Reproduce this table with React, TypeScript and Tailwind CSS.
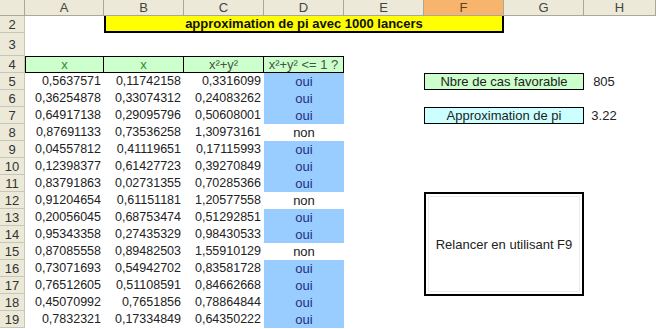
const cols = ["A", "B", "C", "D", "E", "F", "G", "H"];

const rows: [string, string, string, boolean][] = [
  ["0,5637571", "0,11742158", "0,3316099", true],
  ["0,36254878", "0,33074312", "0,24083262", true],
  ["0,64917138", "0,29095796", "0,50608001", true],
  ["0,87691133", "0,73536258", "1,30973161", false],
  ["0,04557812", "0,41119651", "0,17115993", true],
  ["0,12398377", "0,61427723", "0,39270849", true],
  ["0,83791863", "0,02731355", "0,70285366", true],
  ["0,91204654", "0,61151181", "1,20577558", false],
  ["0,20056045", "0,68753474", "0,51292851", true],
  ["0,95343358", "0,27435329", "0,98430533", true],
  ["0,87085558", "0,89482503", "1,55910129", false],
  ["0,73071693", "0,54942702", "0,83581728", true],
  ["0,76512605", "0,51108591", "0,84662668", true],
  ["0,45070992", "0,7651856", "0,78864844", true],
  ["0,7832321", "0,17334849", "0,64350222", true],
];

// excel row n sits on grid row n (grid row 1 is the column header)
const rowStart: Record<number, string> = {
  2: "row-start-2", 3: "row-start-3", 4: "row-start-4", 5: "row-start-5",
  6: "row-start-6", 7: "row-start-7", 8: "row-start-8", 9: "row-start-9",
  10: "row-start-10", 11: "row-start-11", 12: "row-start-12", 13: "row-start-13",
  14: "row-start-14", 15: "row-start-15", 16: "row-start-16", 17: "row-start-17",
  18: "row-start-18", 19: "row-start-19",
};

const ColHeader = ({ label }: { label: string }) => (
  <div
    className={`flex items-center justify-center border-r border-b border-[#aca899] text-[13px] leading-none ${
      label === "F" ? "bg-[#f7b46c] text-[#5a4020]" : "bg-[#ece9d8] text-[#444]"
    }`}
  >
    {label}
  </div>
);

const RowHeader = ({ n }: { n: number }) => (
  <div
    className={`col-start-1 ${rowStart[n]} flex items-center justify-center border-r border-b border-[#c9c6b6] bg-[#ece9d8] text-[13px] leading-none text-[#333]`}
  >
    {n}
  </div>
);

const Num = ({ value, col, n }: { value: string; col: string; n: number }) => (
  <div className={`${col} ${rowStart[n]} flex items-center justify-end pr-[3px] text-[12.5px] leading-none text-[#222]`}>
    {value}
  </div>
);

export default function App() {
  return (
    <div className="w-[656px] h-[329px] overflow-hidden bg-white font-['Liberation_Sans',Arial,sans-serif]">
      <div className="grid grid-cols-[25px_79px_80px_80px_80px_80px_80px_80px_72px] grid-rows-[16px_17px_23px_17px_repeat(15,17px)]">
        <div className="border-r border-b border-[#aca899] bg-[#ece9d8]" />
        {cols.map((c) => (
          <ColHeader key={c} label={c} />
        ))}

        {Array.from({ length: 18 }, (_, i) => (
          <RowHeader key={i} n={i + 2} />
        ))}

        <div className="col-start-3 col-span-5 row-start-2 flex items-center justify-center border-x-2 border-b-2 border-black bg-[#ffff00] text-[13px] font-bold leading-none text-[#111]">
          approximation de pi avec 1000 lancers
        </div>

        <div className="col-start-2 row-start-4 flex items-center justify-center border border-black bg-[#ccffcc] text-[13px] leading-none text-[#338833]">
          x
        </div>
        <div className="col-start-3 row-start-4 flex items-center justify-center border-y border-r border-black bg-[#ccffcc] text-[13px] leading-none text-[#338833]">
          x
        </div>
        <div className="col-start-4 row-start-4 flex items-center justify-center border-y border-r border-black bg-[#ccffcc] text-[13px] leading-none text-[#445544]">
          x²+y²
        </div>
        <div className="col-start-5 row-start-4 flex items-center justify-center border-y border-r border-black bg-[#ccffcc] text-[13px] leading-none text-[#445544]">
          x²+y² &lt;= 1 ?
        </div>

        {rows.map(([a, b, c, ok], i) => {
          const n = i + 5;
          return (
            <div key={n} className="contents">
              <Num value={a} col="col-start-2" n={n} />
              <Num value={b} col="col-start-3" n={n} />
              <Num value={c} col="col-start-4" n={n} />
              <div
                className={`col-start-5 ${rowStart[n]} flex items-center justify-center text-[13px] leading-none ${
                  ok ? "bg-[#99ccff] text-[#1f2f80]" : "bg-white text-[#222]"
                }`}
              >
                {ok ? "oui" : "non"}
              </div>
            </div>
          );
        })}

        <div className="col-start-7 col-span-2 row-start-5 flex items-center justify-center border border-black bg-[#ccffcc] text-[13px] leading-none text-[#222]">
          Nbre de cas favorable
        </div>
        <div className="col-start-9 row-start-5 flex w-[40px] items-center justify-center text-[13px] leading-none text-[#222]">
          805
        </div>

        <div className="col-start-7 col-span-2 row-start-7 flex items-center justify-center border border-black bg-[#ccffff] text-[13px] leading-none text-[#222]">
          Approximation de pi
        </div>
        <div className="col-start-9 row-start-7 flex w-[40px] items-center justify-center text-[13px] leading-none text-[#222]">
          3.22
        </div>

        <div className="col-start-7 col-span-2 row-start-12 row-span-6 h-[104px] self-start border-2 border-black bg-white p-[2px]">
          <div className="flex h-full items-center justify-center border border-[#ececec] text-[13px] leading-none text-[#222]">
            Relancer en utilisant F9
          </div>
        </div>
      </div>
    </div>
  );
}
